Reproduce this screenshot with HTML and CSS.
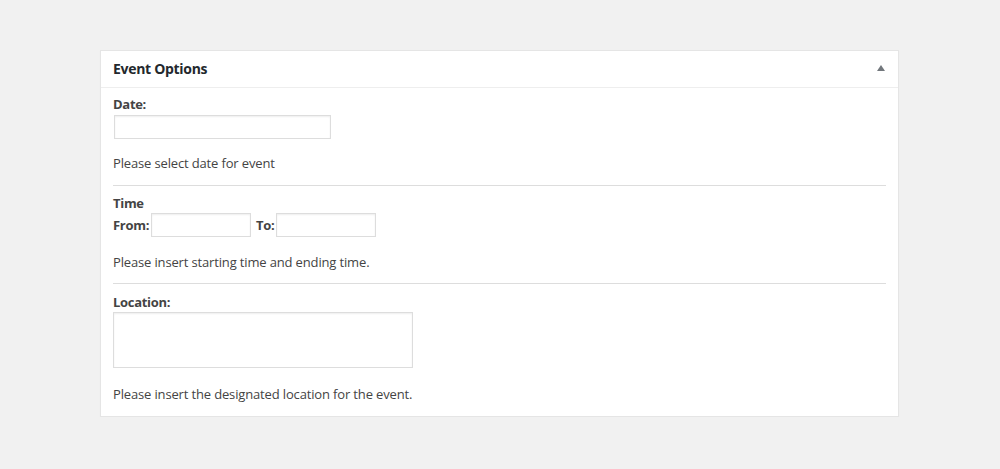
FILE: index.html
```html
<!DOCTYPE html>
<html>
<head>
<meta charset="utf-8">
<link rel="stylesheet" href="styles.css">
</head>
<body>
<div class="postbox">
  <div class="hndle">
    <h2>Event Options</h2>
    <svg class="toggle" width="8" height="6" viewBox="0 0 8 6"><polygon points="4,0 8,6 0,6" fill="#72777c"/></svg>
  </div>
  <div class="inside">
    <div class="field first">
      <label class="lbl">Date:</label>
      <input class="inp date" type="text">
      <p class="desc">Please select date for event</p>
    </div>
    <hr>
    <div class="field">
      <label class="lbl">Time</label>
      <div class="row">
        <label class="lbl">From:</label>
        <input class="inp time" type="text">
        <label class="lbl to">To:</label>
        <input class="inp time" type="text">
      </div>
      <p class="desc d2">Please insert starting time and ending time.</p>
    </div>
    <hr class="hr2">
    <div class="field">
      <label class="lbl">Location:</label>
      <textarea class="inp area"></textarea>
      <p class="desc d3">Please insert the designated location for the event.</p>
    </div>
  </div>
</div>
</body>
</html>
```
FILE: styles.css
```css
* { box-sizing: border-box; }
html, body { margin: 0; padding: 0; }
body {
  background: #f1f1f1;
  font-family: "Open Sans", "Noto Sans", sans-serif;
  font-size: 13px;
  color: #444;
  letter-spacing: -0.15px;
  padding-top: 50px;
  padding-left: 100px;
}
.postbox {
  width: 799px;
  background: #fff;
  border: 1px solid #e5e5e5;
  box-shadow: 0 1px 1px rgba(0,0,0,0.04);
}
.hndle {
  height: 37px;
  border-bottom: 1px solid #eee;
  display: flex;
  align-items: center;
  justify-content: space-between;
  padding: 0 13px 0 12px;
}
.hndle h2 {
  margin: 0;
  font-size: 14px;
  font-weight: 700;
  color: #23282d;
  line-height: 20px;
  margin-top: -1px;
  letter-spacing: -0.3px;
}
.toggle { display: block; margin-top: -3px; }
.inside { padding: 7px 12px 13px 12px; }
.field { display: flex; flex-direction: column; align-items: flex-start; }
.lbl {
  font-weight: 700;
  line-height: 18px;
  display: block;
  color: #444;
  letter-spacing: -0.3px;
}
.inp {
  border: 1px solid #ddd;
  box-shadow: inset 0 1px 2px rgba(0,0,0,0.07);
  background: #fff;
  height: 24px;
  margin: 2px 0 0 0;
  padding: 0;
  font: inherit;
}
.date { width: 217px; margin-left: 1px; }
.row { display: flex; align-items: center; margin-top: 1px; }
.row .inp { margin: 0 0 0 2px; }
.time { width: 100px; }
.to { margin-left: 5px; }
.area { width: 300px; height: 56px; resize: none; display: block; margin-top: 1px; }
.desc { margin: 15px 0 0 0; line-height: 18px; }
.d2 { margin-top: 16px; }
.d3 { margin-top: 17px; }
hr {
  border: 0;
  border-top: 1px solid #ddd;
  margin: 13px 0 8px 0;
  height: 0;
}
.hr2 { margin-top: 12px; margin-bottom: 9px; }
```
